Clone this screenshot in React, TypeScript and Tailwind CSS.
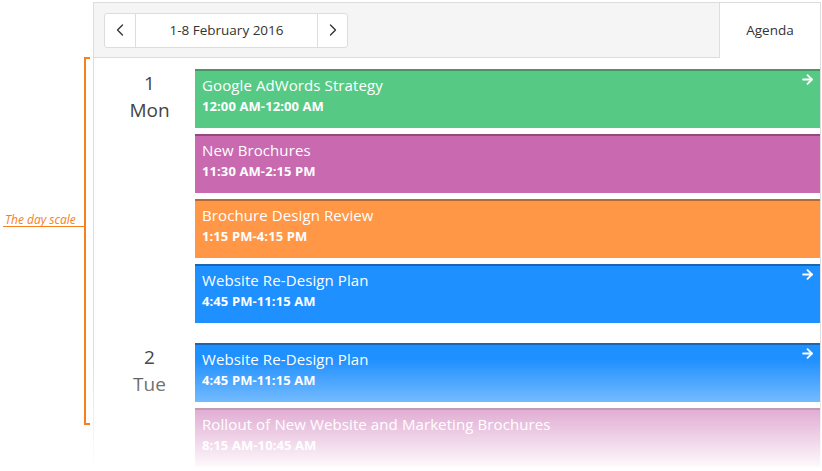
import React from "react";
import { ChevronLeft, ChevronRight, ArrowRight } from "lucide-react";

type Appt = { title: string; time: string; bg: string; border: string; arrow?: boolean };

const day1: Appt[] = [
  { title: "Google AdWords Strategy", time: "12:00 AM-12:00 AM", bg: "bg-[#56ca85]", border: "border-[#4a9467]", arrow: true },
  { title: "New Brochures", time: "11:30 AM-2:15 PM", bg: "bg-[#c969b0]", border: "border-[#8f4a7e]" },
  { title: "Brochure Design Review", time: "1:15 PM-4:15 PM", bg: "bg-[#ff9747]", border: "border-[#b36b35]" },
  { title: "Website Re-Design Plan", time: "4:45 PM-11:15 AM", bg: "bg-[#1e90ff]", border: "border-[#1b66b2]", arrow: true },
];
const day2: Appt[] = [
  { title: "Website Re-Design Plan", time: "4:45 PM-11:15 AM", bg: "bg-[#1e90ff]", border: "border-[#1b66b2]", arrow: true },
  { title: "Rollout of New Website and Marketing Brochures", time: "8:15 AM-10:45 AM", bg: "bg-[#c969b0]", border: "border-[#8f4a7e]" },
];

function Card({ a }: { a: Appt }) {
  return (
    <div className={`relative h-[59px] shrink-0 border-t-2 ${a.border} ${a.bg} pl-[7px] pt-[4px] text-white`}>
      <div className="text-[15px] leading-[20px] tracking-[0.1px]">{a.title}</div>
      <div className="mt-[2px] text-[13px] font-bold leading-[18px] tracking-[0.1px]">{a.time}</div>
      {a.arrow && (
        <ArrowRight className="absolute right-[5px] top-[1px]" size={15} strokeWidth={3} />
      )}
    </div>
  );
}

function Day({ num, name, items }: { num: string; name: string; items: Appt[] }) {
  return (
    <div className="flex shrink-0 pb-[20px]">
      <div className="w-[101px] shrink-0 pl-[10px] pt-[1px] text-center text-[19px] leading-[27px] text-[#444]">
        <div>{num}</div>
        <div>{name}</div>
      </div>
      <div className="flex flex-1 flex-col gap-[6px]">
        {items.map((a, i) => (
          <Card key={i} a={a} />
        ))}
      </div>
    </div>
  );
}

export default function App() {
  return (
    <div
      className="relative flex h-[471px] w-[822px] items-start overflow-hidden bg-white"
      style={{ fontFamily: '"Open Sans", "Noto Sans", sans-serif' }}
    >
      <div className="relative h-[471px] w-[93px] shrink-0">
        <div className="absolute left-[84px] top-[57px] h-[368px] w-[6px] border-y-2 border-l-2 border-[#f7801e]" />
        <div className="absolute left-[3px] top-[226px] h-[1px] w-[82px] bg-[#f7801e]" />
        <div className="absolute left-[5px] top-[212px] text-[12px] italic leading-[16px] text-[#f7801e]">
          The day scale
        </div>
      </div>
      <div className="mt-[2px] flex w-[728px] shrink-0 flex-col border-x border-t border-[#dddddd]">
        <div className="flex h-[55px] shrink-0 border-b border-[#dddddd] bg-[#f5f5f5]">
          <div className="flex flex-1 items-center pl-[10px]">
            <div className="flex h-[35px] overflow-hidden rounded-[3px] border border-[#dddddd] bg-white text-[#333]">
              <div className="flex w-[31px] items-center justify-center border-r border-[#dddddd]">
                <ChevronLeft size={20} strokeWidth={1.6} />
              </div>
              <div className="flex w-[181px] items-center justify-center text-[13.5px]">1-8 February 2016</div>
              <div className="flex w-[30px] items-center justify-center border-l border-[#dddddd]">
                <ChevronRight size={20} strokeWidth={1.6} />
              </div>
            </div>
          </div>
          <div className="-mb-px flex w-[101px] items-center justify-center border-l border-[#dddddd] bg-white text-[13.5px] text-[#333]">
            Agenda
          </div>
        </div>
        <div className="flex flex-col pt-[11px]">
          <Day num="1" name="Mon" items={day1} />
          <Day num="2" name="Tue" items={day2} />
        </div>
      </div>
      <div className="pointer-events-none absolute bottom-0 left-[90px] h-[112px] w-[732px] bg-gradient-to-b from-white/0 to-white" />
    </div>
  );
}
